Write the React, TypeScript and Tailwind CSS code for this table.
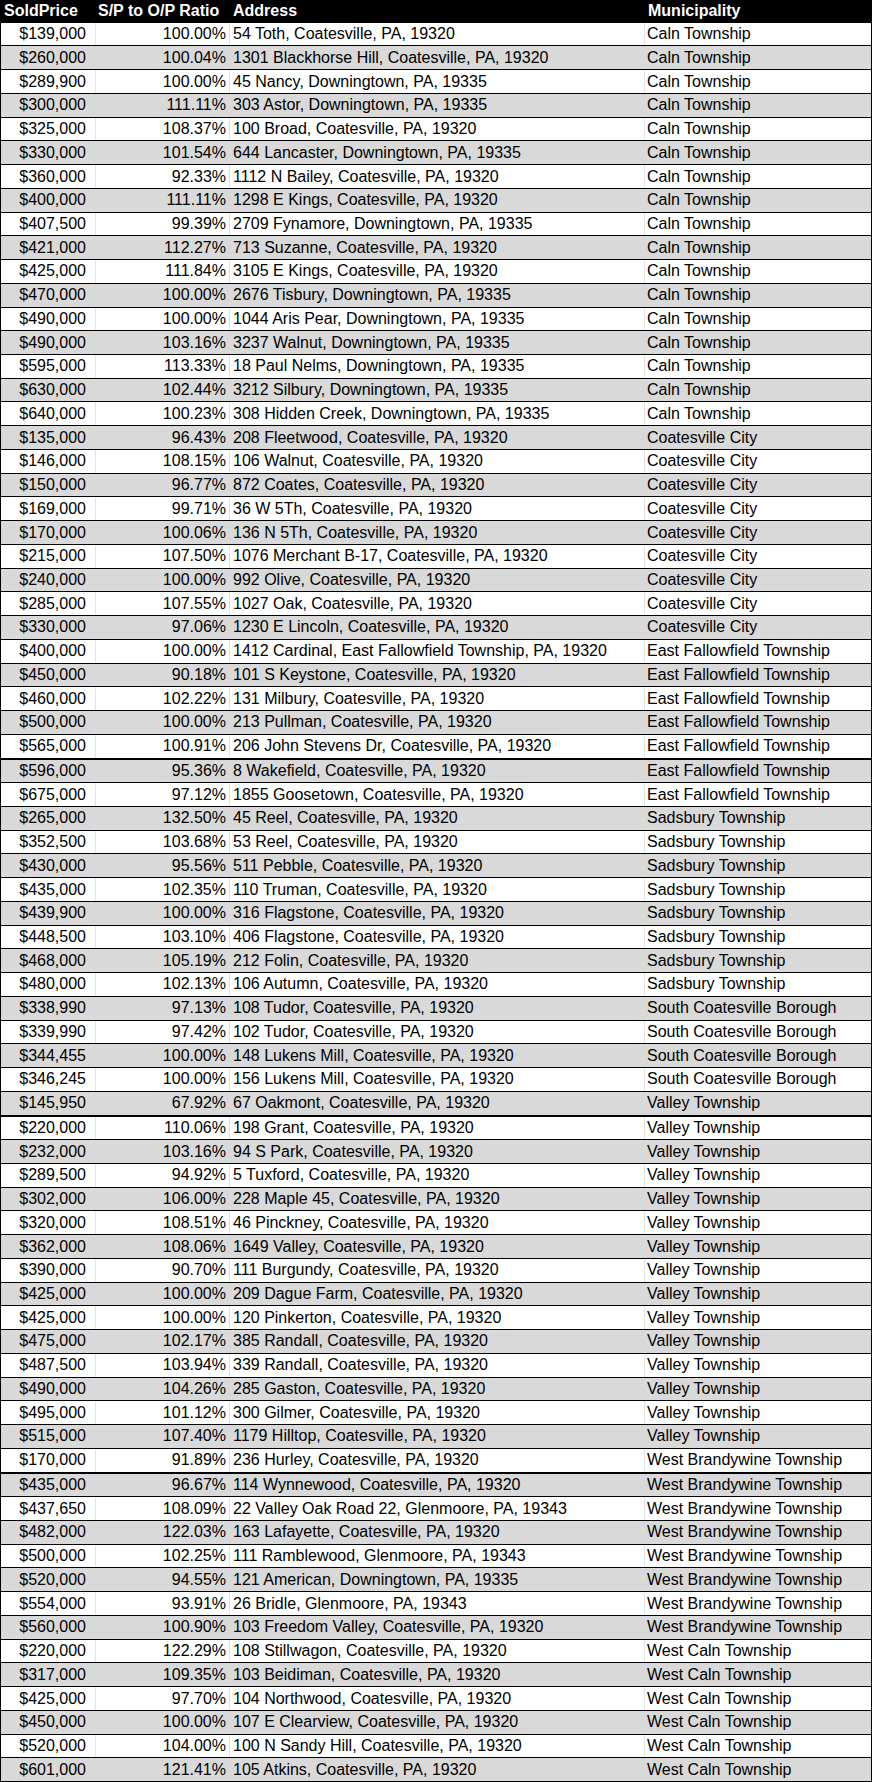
import React from 'react'

interface Sale {
  price: string
  ratio: string
  address: string
  municipality: string
  thick?: boolean
}

const row = (price: string, ratio: string, address: string, municipality: string, thick = false): Sale => ({
  price,
  ratio,
  address,
  municipality,
  thick,
})

const CALN = 'Caln Township'
const CITY = 'Coatesville City'
const EFT = 'East Fallowfield Township'
const SADS = 'Sadsbury Township'
const SCB = 'South Coatesville Borough'
const VAL = 'Valley Township'
const WBT = 'West Brandywine Township'
const WCT = 'West Caln Township'

const sales: Sale[] = [
  row('$139,000', '100.00%', '54 Toth, Coatesville, PA, 19320', CALN),
  row('$260,000', '100.04%', '1301 Blackhorse Hill, Coatesville, PA, 19320', CALN),
  row('$289,900', '100.00%', '45 Nancy, Downingtown, PA, 19335', CALN),
  row('$300,000', '111.11%', '303 Astor, Downingtown, PA, 19335', CALN),
  row('$325,000', '108.37%', '100 Broad, Coatesville, PA, 19320', CALN),
  row('$330,000', '101.54%', '644 Lancaster, Downingtown, PA, 19335', CALN),
  row('$360,000', '92.33%', '1112 N Bailey, Coatesville, PA, 19320', CALN),
  row('$400,000', '111.11%', '1298 E Kings, Coatesville, PA, 19320', CALN),
  row('$407,500', '99.39%', '2709 Fynamore, Downingtown, PA, 19335', CALN),
  row('$421,000', '112.27%', '713 Suzanne, Coatesville, PA, 19320', CALN),
  row('$425,000', '111.84%', '3105 E Kings, Coatesville, PA, 19320', CALN),
  row('$470,000', '100.00%', '2676 Tisbury, Downingtown, PA, 19335', CALN),
  row('$490,000', '100.00%', '1044 Aris Pear, Downingtown, PA, 19335', CALN),
  row('$490,000', '103.16%', '3237 Walnut, Downingtown, PA, 19335', CALN),
  row('$595,000', '113.33%', '18 Paul Nelms, Downingtown, PA, 19335', CALN),
  row('$630,000', '102.44%', '3212 Silbury, Downingtown, PA, 19335', CALN),
  row('$640,000', '100.23%', '308 Hidden Creek, Downingtown, PA, 19335', CALN),
  row('$135,000', '96.43%', '208 Fleetwood, Coatesville, PA, 19320', CITY),
  row('$146,000', '108.15%', '106 Walnut, Coatesville, PA, 19320', CITY),
  row('$150,000', '96.77%', '872 Coates, Coatesville, PA, 19320', CITY),
  row('$169,000', '99.71%', '36 W 5Th, Coatesville, PA, 19320', CITY),
  row('$170,000', '100.06%', '136 N 5Th, Coatesville, PA, 19320', CITY),
  row('$215,000', '107.50%', '1076 Merchant B-17, Coatesville, PA, 19320', CITY),
  row('$240,000', '100.00%', '992 Olive, Coatesville, PA, 19320', CITY),
  row('$285,000', '107.55%', '1027 Oak, Coatesville, PA, 19320', CITY),
  row('$330,000', '97.06%', '1230 E Lincoln, Coatesville, PA, 19320', CITY),
  row('$400,000', '100.00%', '1412 Cardinal, East Fallowfield Township, PA, 19320', EFT),
  row('$450,000', '90.18%', '101 S Keystone, Coatesville, PA, 19320', EFT),
  row('$460,000', '102.22%', '131 Milbury, Coatesville, PA, 19320', EFT),
  row('$500,000', '100.00%', '213 Pullman, Coatesville, PA, 19320', EFT),
  row('$565,000', '100.91%', '206 John Stevens Dr, Coatesville, PA, 19320', EFT, true),
  row('$596,000', '95.36%', '8 Wakefield, Coatesville, PA, 19320', EFT),
  row('$675,000', '97.12%', '1855 Goosetown, Coatesville, PA, 19320', EFT),
  row('$265,000', '132.50%', '45 Reel, Coatesville, PA, 19320', SADS),
  row('$352,500', '103.68%', '53 Reel, Coatesville, PA, 19320', SADS),
  row('$430,000', '95.56%', '511 Pebble, Coatesville, PA, 19320', SADS),
  row('$435,000', '102.35%', '110 Truman, Coatesville, PA, 19320', SADS),
  row('$439,900', '100.00%', '316 Flagstone, Coatesville, PA, 19320', SADS),
  row('$448,500', '103.10%', '406 Flagstone, Coatesville, PA, 19320', SADS),
  row('$468,000', '105.19%', '212 Folin, Coatesville, PA, 19320', SADS),
  row('$480,000', '102.13%', '106 Autumn, Coatesville, PA, 19320', SADS),
  row('$338,990', '97.13%', '108 Tudor, Coatesville, PA, 19320', SCB),
  row('$339,990', '97.42%', '102 Tudor, Coatesville, PA, 19320', SCB),
  row('$344,455', '100.00%', '148 Lukens Mill, Coatesville, PA, 19320', SCB),
  row('$346,245', '100.00%', '156 Lukens Mill, Coatesville, PA, 19320', SCB),
  row('$145,950', '67.92%', '67 Oakmont, Coatesville, PA, 19320', VAL, true),
  row('$220,000', '110.06%', '198 Grant, Coatesville, PA, 19320', VAL),
  row('$232,000', '103.16%', '94 S Park, Coatesville, PA, 19320', VAL),
  row('$289,500', '94.92%', '5 Tuxford, Coatesville, PA, 19320', VAL),
  row('$302,000', '106.00%', '228 Maple 45, Coatesville, PA, 19320', VAL),
  row('$320,000', '108.51%', '46 Pinckney, Coatesville, PA, 19320', VAL),
  row('$362,000', '108.06%', '1649 Valley, Coatesville, PA, 19320', VAL),
  row('$390,000', '90.70%', '111 Burgundy, Coatesville, PA, 19320', VAL),
  row('$425,000', '100.00%', '209 Dague Farm, Coatesville, PA, 19320', VAL),
  row('$425,000', '100.00%', '120 Pinkerton, Coatesville, PA, 19320', VAL),
  row('$475,000', '102.17%', '385 Randall, Coatesville, PA, 19320', VAL),
  row('$487,500', '103.94%', '339 Randall, Coatesville, PA, 19320', VAL),
  row('$490,000', '104.26%', '285 Gaston, Coatesville, PA, 19320', VAL),
  row('$495,000', '101.12%', '300 Gilmer, Coatesville, PA, 19320', VAL),
  row('$515,000', '107.40%', '1179 Hilltop, Coatesville, PA, 19320', VAL),
  row('$170,000', '91.89%', '236 Hurley, Coatesville, PA, 19320', WBT, true),
  row('$435,000', '96.67%', '114 Wynnewood, Coatesville, PA, 19320', WBT),
  row('$437,650', '108.09%', '22 Valley Oak Road 22, Glenmoore, PA, 19343', WBT),
  row('$482,000', '122.03%', '163 Lafayette, Coatesville, PA, 19320', WBT),
  row('$500,000', '102.25%', '111 Ramblewood, Glenmoore, PA, 19343', WBT),
  row('$520,000', '94.55%', '121 American, Downingtown, PA, 19335', WBT),
  row('$554,000', '93.91%', '26 Bridle, Glenmoore, PA, 19343', WBT),
  row('$560,000', '100.90%', '103 Freedom Valley, Coatesville, PA, 19320', WBT),
  row('$220,000', '122.29%', '108 Stillwagon, Coatesville, PA, 19320', WCT),
  row('$317,000', '109.35%', '103 Beidiman, Coatesville, PA, 19320', WCT),
  row('$425,000', '97.70%', '104 Northwood, Coatesville, PA, 19320', WCT),
  row('$450,000', '100.00%', '107 E Clearview, Coatesville, PA, 19320', WCT),
  row('$520,000', '104.00%', '100 N Sandy Hill, Coatesville, PA, 19320', WCT),
  row('$601,000', '121.41%', '105 Atkins, Coatesville, PA, 19320', WCT),
]

const cols = 'grid grid-cols-[95px_134px_415px_1fr]'

const App = () => {
  return (
    <div
      className="w-[872px] h-[1782px] flex flex-col bg-white text-black text-[16px] leading-none"
      style={{ fontFamily: '"Liberation Sans", Arial, sans-serif' }}
    >
      <div className={`${cols} flex-1 min-h-0 bg-black text-white font-bold items-center`}>
        <div className="pl-[4px]">SoldPrice</div>
        <div className="pl-[3px]">S/P to O/P Ratio</div>
        <div className="pl-[4px]">Address</div>
        <div className="pl-[4px]">Municipality</div>
      </div>
      {sales.map((s, i) => {
        const shaded = i % 2 === 1
        const sep = shaded ? 'border-[#d9d9d9]' : 'border-[#e3e3e3]'
        return (
          <div
            key={i}
            className={`${cols} flex-1 min-h-0 border-x border-black ${s.thick ? 'border-b-2' : 'border-b'} ${shaded ? 'bg-[#d9d9d9]' : 'bg-white'}`}
          >
            <div className={`flex items-center justify-end pr-[9px] border-r ${sep}`}>{s.price}</div>
            <div className={`flex items-center justify-end pr-[3px] border-r ${sep}`}>{s.ratio}</div>
            <div className={`flex items-center pl-[3px] border-r ${sep} whitespace-nowrap`}>{s.address}</div>
            <div className="flex items-center pl-[2px] whitespace-nowrap">{s.municipality}</div>
          </div>
        )
      })}
    </div>
  )
}

export default App
